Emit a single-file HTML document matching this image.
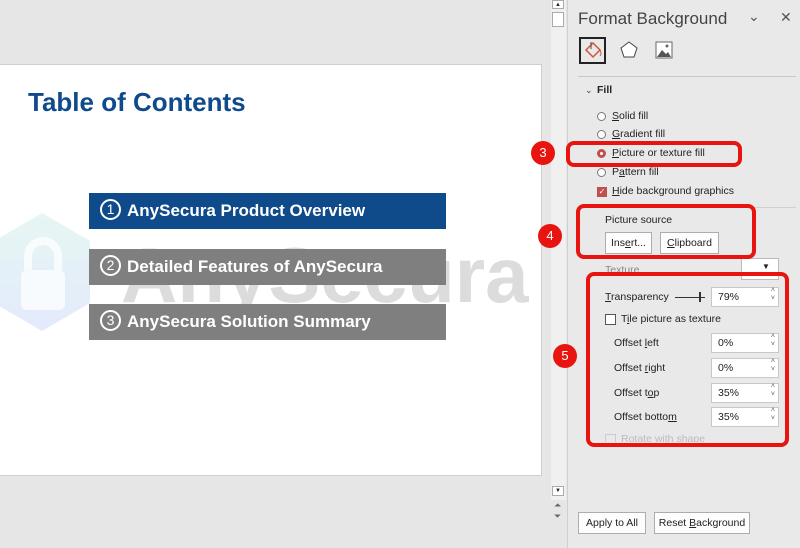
<!DOCTYPE html>
<html><head><style>
*{margin:0;padding:0;box-sizing:border-box}
body{width:800px;height:548px;overflow:hidden;background:#e6e6e6;font-family:"Liberation Sans",sans-serif;position:relative;font-size:11px;color:#222}
.a{position:absolute}
.slide{left:0;top:64px;width:542px;height:412px;background:#fff;border:1px solid #cfcfcf;border-left:none;overflow:hidden}
.bar{position:absolute;left:89px;width:357px;height:36px;color:#fff;font-weight:bold;font-size:17px;line-height:36px;padding-left:11px}
.circ{display:inline-block;width:21px;height:21px;border:2px solid #fff;border-radius:50%;font-size:14px;line-height:17px;text-align:center;margin-right:6px;vertical-align:2px;font-weight:normal}
.panel{left:567px;top:0;width:233px;height:548px;background:#e9e9e9;border-left:1px solid #d0d0d0}
.rb{position:absolute;width:9px;height:9px;border:1px solid #777;border-radius:50%;background:#fff}
.lbl{position:absolute;font-size:10.5px;color:#222}
.btn{position:absolute;background:#fdfdfd;border:1px solid #adadad;font-size:10.5px;text-align:center;line-height:20px}
.inp{position:absolute;left:711px;width:68px;height:20px;background:#fff;border:1px solid #c8c8c8;font-size:10.5px;line-height:18px;padding-left:6px}
.inp:after{content:"˄\A˅";white-space:pre;position:absolute;right:3px;top:-1px;font-size:7px;line-height:8px;color:#555}
.red{position:absolute;border:4px solid #e8140f;border-radius:8px}
.num{position:absolute;width:24px;height:24px;border-radius:50%;background:#e8140f;color:#fff;font-size:13px;text-align:center;line-height:24px}
</style></head><body>
<div class="a slide">
 <div class="a" style="left:28px;top:22px;font-size:26px;font-weight:bold;color:#0f4a8a">Table of Contents</div>
 <svg class="a" style="left:-10px;top:145px" width="105" height="125"><defs><linearGradient id="g" x1="0" y1="0" x2="0" y2="1"><stop offset="0" stop-color="#e6f6f3"/><stop offset="1" stop-color="#e3eafc"/></linearGradient></defs><polygon points="52,3 100,31 100,93 52,121 4,93 4,31" fill="url(#g)"/><rect x="31" y="60" width="44" height="40" rx="6" fill="#fff" opacity=".75"/><path d="M38 60 V46 a15 15 0 0 1 30 0 V60" stroke="#fff" stroke-width="8" fill="none" opacity=".75"/></svg>
 <div class="a" style="left:121px;top:171px;font-size:78px;line-height:78px;font-weight:bold;color:#dcdcdc;white-space:nowrap">AnySecura</div>
 <div class="bar" style="top:128px;background:#0f4a8a"><span class="circ">1</span>AnySecura Product Overview</div>
 <div class="bar" style="top:184px;background:#7f7f7f"><span class="circ">2</span>Detailed Features of AnySecura</div>
 <div class="bar" style="top:239px;background:#7f7f7f"><span class="circ">3</span>AnySecura Solution Summary</div>
</div>
<div class="a" style="left:551px;top:0;width:15px;height:500px;background:#f0f0f0"></div>
<div class="a" style="left:552px;top:0;width:12px;height:9px;background:#fff;border:1px solid #aaa;font-size:6px;text-align:center;line-height:8px">▲</div>
<div class="a" style="left:552px;top:12px;width:12px;height:15px;background:#fff;border:1px solid #aaa"></div>
<div class="a" style="left:552px;top:486px;width:12px;height:10px;background:#fff;border:1px solid #aaa;font-size:6px;text-align:center;line-height:9px">▼</div>
<div class="a" style="left:554px;top:500px;font-size:9px;color:#666;line-height:11px">⏶<br>⏷</div>
<div class="a panel"></div>
<div class="a" style="left:578px;top:9px;font-size:17px;color:#444">Format Background</div>
<div class="a" style="left:748px;top:8px;font-size:14px;color:#555">⌄</div>
<div class="a" style="left:780px;top:9px;font-size:14px;color:#555">✕</div>
<div class="a" style="left:579px;top:37px;width:27px;height:27px;border:2px solid #222"></div>
<svg class="a" style="left:583px;top:40px" width="20" height="20"><path d="M3 10 L10 3 L17 10 L10 17 Z" fill="none" stroke="#d4553a" stroke-width="1.5"/><path d="M8 2 V9" stroke="#444"/><path d="M17 10 q2 4 0 6" stroke="#d4553a" fill="none"/></svg>
<svg class="a" style="left:619px;top:40px" width="20" height="20"><polygon points="10,2 18,8 15,17 5,17 2,8" fill="#fff" stroke="#444"/></svg>
<svg class="a" style="left:655px;top:41px" width="18" height="18"><rect x="1" y="1" width="16" height="16" fill="#fff" stroke="#666"/><path d="M2 16 L7 9 L11 13 L13 11 L16 16Z" fill="#555"/><circle cx="12" cy="5" r="1.5" fill="#666"/></svg>
<div class="a" style="left:578px;top:76px;width:218px;border-top:1px solid #c8c8c8"></div>
<div class="a" style="left:585px;top:85px;font-size:9px;color:#444">⌄</div>
<div class="lbl" style="left:597px;top:84px;font-weight:bold">Fill</div>
<div class="rb" style="left:597px;top:112px"></div><div class="lbl" style="left:612px;top:110px"><u>S</u>olid fill</div>
<div class="rb" style="left:597px;top:130px"></div><div class="lbl" style="left:612px;top:128px"><u>G</u>radient fill</div>
<div class="rb" style="left:597px;top:149px;border:3px solid #c0504d"></div><div class="lbl" style="left:612px;top:147px"><u>P</u>icture or texture fill</div>
<div class="rb" style="left:597px;top:168px"></div><div class="lbl" style="left:612px;top:166px">P<u>a</u>ttern fill</div>
<div class="a" style="left:597px;top:187px;width:10px;height:10px;background:#c0504d;color:#fff;font-size:8px;line-height:10px;text-align:center">✓</div><div class="lbl" style="left:612px;top:185px"><u>H</u>ide background graphics</div>
<div class="a" style="left:578px;top:207px;width:218px;border-top:1px solid #d0d0d0"></div>
<div class="lbl" style="left:605px;top:214px">Picture source</div>
<div class="btn" style="left:605px;top:232px;width:47px">Ins<u>e</u>rt...</div>
<div class="btn" style="left:660px;top:232px;width:59px"><u>C</u>lipboard</div>
<div class="lbl" style="left:605px;top:264px;color:#888">Texture</div>
<div class="a" style="left:741px;top:258px;width:38px;height:22px;background:#fff;border:1px solid #bbb;font-size:8px;padding:3px 0 0 20px">▼</div>
<div class="lbl" style="left:605px;top:291px"><u>T</u>ransparency</div>
<div class="a" style="left:675px;top:297px;width:30px;border-top:1px solid #333"></div>
<div class="a" style="left:699px;top:292px;height:10px;border-left:2px solid #333"></div>
<div class="inp" style="top:287px">79%</div>
<div class="a" style="left:605px;top:314px;width:11px;height:11px;border:1px solid #555;background:#fff"></div>
<div class="lbl" style="left:621px;top:313px">T<u>i</u>le picture as texture</div>
<div class="lbl" style="left:614px;top:337px">Offset <u>l</u>eft</div><div class="inp" style="top:333px">0%</div>
<div class="lbl" style="left:614px;top:362px">Offset <u>r</u>ight</div><div class="inp" style="top:358px">0%</div>
<div class="lbl" style="left:614px;top:387px">Offset t<u>o</u>p</div><div class="inp" style="top:383px">35%</div>
<div class="lbl" style="left:614px;top:411px">Offset botto<u>m</u></div><div class="inp" style="top:407px">35%</div>
<div class="a" style="left:605px;top:434px;width:11px;height:8px;border:1px solid #ccc;border-bottom:none"></div>
<div class="lbl" style="left:621px;top:433px;color:#bbb;height:9px;overflow:hidden">Rotate with shape</div>
<div class="btn" style="left:578px;top:512px;width:68px;height:22px">Apply to All</div>
<div class="btn" style="left:654px;top:512px;width:96px;height:22px">Reset <u>B</u>ackground</div>
<div class="red" style="left:566px;top:141px;width:176px;height:26px"></div>
<div class="red" style="left:576px;top:204px;width:180px;height:55px"></div>
<div class="red" style="left:586px;top:272px;width:203px;height:175px"></div>
<div class="num" style="left:531px;top:141px">3</div>
<div class="num" style="left:538px;top:224px">4</div>
<div class="num" style="left:553px;top:344px">5</div>
</body></html>
